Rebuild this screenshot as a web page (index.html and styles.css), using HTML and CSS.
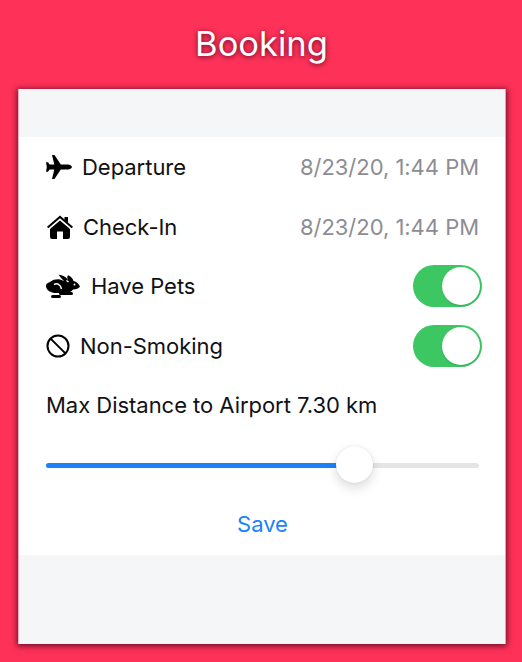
FILE: index.html
```html
<!DOCTYPE html>
<html lang="en">
<head>
<meta charset="utf-8">
<title>Booking</title>
<link rel="stylesheet" href="styles.css">
</head>
<body>
<header class="top"><h1 class="title">Booking</h1></header>
<main class="card">
  <div class="band band-top"></div>
  <section class="form">
    <div class="row">
      <div class="label">
        <svg class="icon plane" viewBox="0 0 26 24"><path d="M6 0h2.500l6.300 9.600h7.200c2 0 3.500 1.200 4 2.400-.5 1.200-2 2.400-4 2.400h-7.200L8.500 24H6l2.300-9.600H3.600L2 16.800H0L.8 12 0 7.200h2l1.600 2.400h4.700z"/></svg>
        <span>Departure</span>
      </div>
      <span class="value">8/23/20, 1:44 PM</span>
    </div>
    <div class="row">
      <div class="label">
        <svg class="icon home" viewBox="0 0 26 24"><path d="M13 .5 17.500 4.400V2H21v5.400l5 4.400-1.300 1.500L13 3.300 1.300 13.300 0 11.800z"/><path d="M13 5.500 23 14v8a2 2 0 0 1-2 2h-5v-7.500h-6V24H5a2 2 0 0 1-2-2v-8z"/></svg>
        <span>Check-In</span>
      </div>
      <span class="value">8/23/20, 1:44 PM</span>
    </div>
    <div class="row">
      <div class="label gap-wide">
        <svg class="icon rabbit" viewBox="0 0 34 24"><path d="M0 11C1 9 2.500 8.500 4 8 7 5.500 11 5 14 5.500L18 7C16 5 14 3 12.500 .8 16.500 .8 20 3 22 6 21 4 21 2.500 22 1.200 25 2.500 27 4.500 27.500 7 30.500 7.500 33 10 34 12.500 33 14.500 30 15.500 27 15.500 25.500 17.500 24 18.500 21.500 19H10C6 19 2 17 1 15 0 13.500-.3 12 0 11z"/><path class="stripe" d="M8 10.500C11 9 14.500 10 15.500 15M20.500 6.500 22.500 8"/><circle class="eye" cx="28.500" cy="10.500" r="1"/><rect x="5" y="21" width="10" height="3" rx="1.500"/><rect x="13" y="18" width="14" height="3" rx="1.500"/></svg>
        <span>Have Pets</span>
      </div>
      <div class="switch"><div class="switch-knob"></div></div>
    </div>
    <div class="row">
      <div class="label gap-narrow">
        <svg class="icon ban" viewBox="0 0 24 24"><circle cx="12" cy="12" r="10.500"/><path d="M4.600 4.600 19.400 19.400"/></svg>
        <span>Non-Smoking</span>
      </div>
      <div class="switch"><div class="switch-knob"></div></div>
    </div>
    <div class="row">
      <span class="label">Max Distance to Airport 7.30 km</span>
    </div>
    <div class="row">
      <div class="slider">
        <div class="slider-fill" style="width: 71.8%"></div>
        <div class="slider-knob"></div>
      </div>
    </div>
    <div class="row row-center"><span class="save">Save</span></div>
  </section>
  <div class="band band-bottom"></div>
</main>
</body>
</html>
```
FILE: styles.css
```css
* { box-sizing: border-box; }
html, body { margin: 0; height: 100%; }
body {
  width: 522px;
  height: 662px;
  overflow: hidden;
  background: #fe3159;
  font-family: Inter, "Liberation Sans", sans-serif;
  color: #111114;
}
.top {
  height: 89px;
  display: flex;
  align-items: center;
  justify-content: center;
  padding: 0 0 3px 1px;
}
.title {
  margin: 0;
  font-size: 34.500px;
  font-weight: 400;
  color: #fff;
  text-shadow: 0 1px 5px rgba(70, 0, 20, .85);
}
.card {
  margin-left: 18px;
  width: 488px;
  height: 555px;
  background: #f5f6f8;
  border-left: 1px solid #e9b4c2;
  border-right: 1px solid #d9a5b2;
  box-shadow: 0 1px 6px 1px rgba(60, 0, 20, .75);
  display: flex;
  flex-direction: column;
}
.band-top { height: 48px; }
.band-bottom { flex: 1; }
.form {
  background: #fff;
  height: 418px;
  padding: .5px 26px 0 27px;
  display: flex;
  flex-direction: column;
}
.row {
  height: 59.500px;
  flex: none;
  display: flex;
  align-items: center;
  justify-content: space-between;
  letter-spacing: -.03px;
}
.row-center { justify-content: center; }
.label {
  display: flex;
  align-items: center;
  gap: 10px;
  font-size: 22px;
}
.gap-wide { gap: 11px; }
.gap-narrow { gap: 10px; }
.icon { display: block; fill: #000; flex: none; }
.plane { width: 26px; height: 24px; }
.home { width: 26px; height: 24px; margin-left: 1px; }
.rabbit { width: 34px; height: 24px; }
.stripe { fill: none; stroke: #fff; stroke-width: 1.500; }
.eye { fill: #fff; }
.ban { width: 24px; height: 24px; fill: none; stroke: #000; stroke-width: 2; }
.value {
  font-size: 22px;
  color: #8d8d92;
}
.switch {
  width: 69px;
  height: 42px;
  margin-right: -3px;
  border-radius: 21px;
  background: #3dc763;
  padding: 2px;
  display: flex;
  justify-content: flex-end;
}
.switch-knob {
  width: 38px;
  height: 38px;
  border-radius: 50%;
  background: #fff;
  box-shadow: 0 1px 2px rgba(0, 0, 0, .15);
}
.slider {
  position: relative;
  width: 433px;
  height: 5px;
  margin-top: 1px;
  border-radius: 3px;
  background: #e5e5e7;
}
.slider-fill {
  height: 5px;
  border-radius: 3px 0 0 3px;
  background: #1a82fb;
}
.slider-knob {
  position: absolute;
  left: 290px;
  top: -17px;
  width: 37px;
  height: 37px;
  border-radius: 50%;
  background: #fff;
  box-shadow: 0 5px 12px rgba(0, 0, 0, .14), 0 0 2px rgba(0, 0, 0, .12);
}
.save {
  font-size: 22px;
  color: #1a82fb;
}
```
